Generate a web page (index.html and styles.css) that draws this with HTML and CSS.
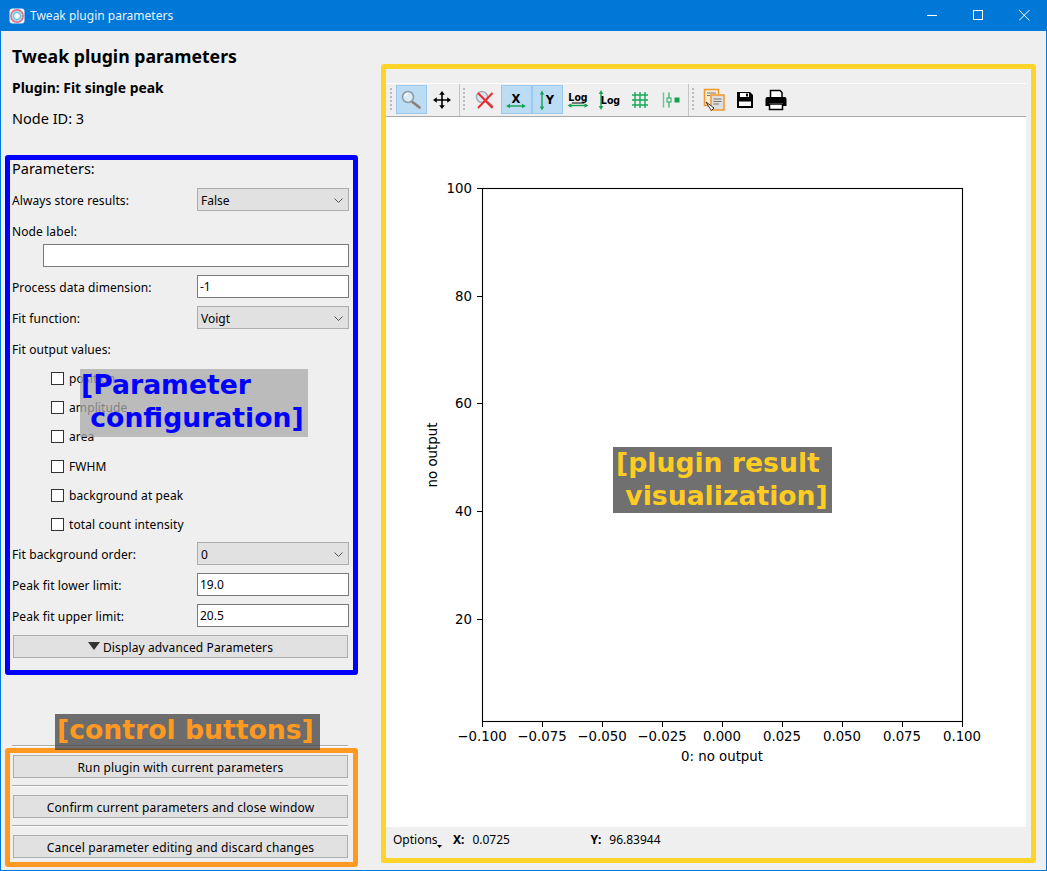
FILE: index.html
```html
<!DOCTYPE html>
<html lang="en">
<head>
<meta charset="utf-8">
<title>Tweak plugin parameters</title>
<link rel="stylesheet" href="styles.css">
</head>
<body>
<div class="window">
  <header class="titlebar">
    <svg class="app-icon" width="16" height="16" viewBox="0 0 16 16"><rect x="0.5" y="0.5" width="15" height="15" rx="3" fill="#f4f4f8"/><circle cx="8" cy="8" r="6.2" fill="#a5dbe3" stroke="#f0608a" stroke-width="1.4"/><circle cx="8" cy="8" r="3.6" fill="#e2f4f7" stroke="#5fbccd" stroke-width="1"/><circle cx="8" cy="8" r="1.4" fill="#fff"/></svg>
    <span class="title-text">Tweak plugin parameters</span>
    <div class="win-controls">
      <span class="win-btn"><svg width="11" height="11" viewBox="0 0 11 11"><path d="M0 5.500H10" stroke="#fff"/></svg></span>
      <span class="win-btn"><svg width="11" height="11" viewBox="0 0 11 11"><rect x="0.500" y="0.500" width="9" height="9" fill="none" stroke="#fff"/></svg></span>
      <span class="win-btn"><svg width="11" height="11" viewBox="0 0 11 11"><path d="M0 0L10.500 10.500M10.500 0L0 10.500" stroke="#fff"/></svg></span>
    </div>
  </header>

  <div class="content">
    <aside class="left">
      <h1 class="heading">Tweak plugin parameters</h1>
      <p class="plugin-name">Plugin: Fit single peak</p>
      <p class="node-id">Node ID: 3</p>

      <section class="params">
        <p class="params-title">Parameters:</p>
        <div class="row"><span class="label">Always store results:</span><div class="combo"><span>False</span><svg width="9" height="5" viewBox="0 0 9 5"><path d="M0.500 0.500L4.500 4.500L8.500 0.500" fill="none" stroke="#555"/></svg></div></div>
        <div class="row"><span class="label">Node label:</span></div>
        <div class="row row-end"><input class="field field-wide" type="text" value=""></div>
        <div class="row"><span class="label">Process data dimension:</span><input class="field" type="text" value="-1"></div>
        <div class="row"><span class="label">Fit function:</span><div class="combo"><span>Voigt</span><svg width="9" height="5" viewBox="0 0 9 5"><path d="M0.500 0.500L4.500 4.500L8.500 0.500" fill="none" stroke="#555"/></svg></div></div>
        <div class="row"><span class="label">Fit output values:</span></div>
        <ul class="checks">
          <li class="check"><span class="box"></span>position</li>
          <li class="check"><span class="box"></span>amplitude</li>
          <li class="check"><span class="box"></span>area</li>
          <li class="check"><span class="box"></span>FWHM</li>
          <li class="check"><span class="box"></span>background at peak</li>
          <li class="check"><span class="box"></span>total count intensity</li>
        </ul>
        <div class="row"><span class="label">Fit background order:</span><div class="combo"><span>0</span><svg width="9" height="5" viewBox="0 0 9 5"><path d="M0.500 0.500L4.500 4.500L8.500 0.500" fill="none" stroke="#555"/></svg></div></div>
        <div class="row"><span class="label">Peak fit lower limit:</span><input class="field" type="text" value="19.0"></div>
        <div class="row"><span class="label">Peak fit upper limit:</span><input class="field" type="text" value="20.5"></div>
        <button class="btn btn-adv" type="button"><svg width="12" height="8" viewBox="0 0 12 8"><path d="M0 0H12L6 8Z" fill="#333"/></svg>Display advanced Parameters</button>
      </section>

      <footer class="controls">
        <hr class="sep">
        <button class="btn" type="button">Run plugin with current parameters</button>
        <hr class="sep">
        <button class="btn" type="button">Confirm current parameters and close window</button>
        <hr class="sep">
        <button class="btn" type="button">Cancel parameter editing and discard changes</button>
      </footer>
    </aside>

    <main class="right">
      <div class="toolbar">
        <div class="tool-group">
          <span class="tool active"><svg width="24" height="24" viewBox="0 0 24 24"><path d="M13.500 14L20.500 19.500" stroke="#8a7f72" stroke-width="2.600" stroke-linecap="round"/><circle cx="9" cy="9" r="5.500" fill="#d8ebf7" stroke="#9398a0" stroke-width="1.500"/><path d="M6 8A3.500 3.500 0 0 1 9 5.500" stroke="#fff" stroke-width="1.300" fill="none"/></svg></span>
          <span class="tool"><svg width="24" height="24" viewBox="0 0 24 24"><path d="M12 5V19M5 12H19" stroke="#000" stroke-width="1.600"/><path d="M12 3L14.800 6.800H9.200ZM12 21L9.200 17.200H14.800ZM3 12L6.800 9.200V14.800ZM21 12L17.200 14.800V9.200Z" fill="#000"/></svg></span>
        </div>
        <div class="tool-group">
          <span class="tool"><svg width="24" height="24" viewBox="0 0 24 24"><path d="M13 13L20 19" stroke="#9a9088" stroke-width="2.500"/><circle cx="9" cy="9" r="5.500" fill="#dbe8f1" stroke="#a7acb2" stroke-width="1.500"/><path d="M5 5L19.500 20M19.500 5L5 20" stroke="#ea2b30" stroke-width="2"/></svg></span>
          <span class="tool active"><svg width="24" height="24" viewBox="0 0 24 24"><text class="axis-letter" x="12" y="15" text-anchor="middle">X</text><path d="M4 18H20" stroke="#12a150" stroke-width="1.400"/><path d="M2 18L6 15.800V20.200ZM22 18L18 15.800V20.200Z" fill="#12a150"/></svg></span>
          <span class="tool active"><svg width="24" height="24" viewBox="0 0 24 24"><path d="M7 5V19" stroke="#12a150" stroke-width="1.400"/><path d="M7 2.500L4.800 6.500H9.200ZM7 22.500L4.800 18.500H9.200Z" fill="#12a150"/><text class="axis-letter" x="15" y="16" text-anchor="middle">Y</text></svg></span>
          <span class="tool"><svg width="24" height="24" viewBox="0 0 24 24"><text class="log-letter" x="12" y="12.500" text-anchor="middle">Log</text><path d="M6 15H18" stroke="#000"/><path d="M4 17.500H20" stroke="#12a150" stroke-width="1.400"/><path d="M1.500 17.500L5.500 15.300V19.700ZM22.500 17.500L18.500 15.300V19.700Z" fill="#12a150"/></svg></span>
          <span class="tool"><svg width="24" height="24" viewBox="0 0 24 24"><path d="M4 5V19" stroke="#12a150" stroke-width="1.400"/><path d="M4 2L1.800 6H6.200ZM4 22L1.800 18H6.200Z" fill="#12a150"/><text class="log-letter" x="13.500" y="15.500" text-anchor="middle">Log</text></svg></span>
          <span class="tool"><svg width="24" height="24" viewBox="0 0 24 24"><path d="M7 4V20M12 4V20M17 4V20M4 7H20M4 12H20M4 17H20" stroke="#18a85a" stroke-width="1.400"/></svg></span>
          <span class="tool"><svg width="24" height="24" viewBox="0 0 24 24"><path d="M4.500 4.500V19.500" stroke="#5cc79a" stroke-width="1.400"/><path d="M10 4.500V10M10 14V19.500" stroke="#18a85a" stroke-width="1.100"/><rect x="8" y="10" width="4" height="4" fill="none" stroke="#18a85a"/><rect x="15.500" y="9.500" width="5" height="5" fill="#12a150"/></svg></span>
        </div>
        <div class="tool-group">
          <span class="tool"><svg width="24" height="24" viewBox="0 0 24 24"><rect x="2.500" y="1.500" width="14" height="16" fill="#f6ebd6" stroke="#f0992c" stroke-width="1.500"/><rect x="9" y="7" width="13" height="15" fill="#dedede" stroke="#f0992c" stroke-width="1.500"/><path d="M5 5H14M5 7.500H8M11.500 11H19.500M11.500 13.500H19.500M11.500 16H17" stroke="#777"/><path d="M4 14L12 20L9.500 22.500L7 19Z" fill="#fff" stroke="#333"/></svg></span>
          <span class="tool"><svg width="24" height="24" viewBox="0 0 24 24"><path d="M4 4H17L20 7V20H4Z" fill="#000"/><rect x="7" y="5" width="9" height="4" fill="#fff"/><rect x="13" y="5.500" width="2" height="3" fill="#000"/><rect x="6" y="13.500" width="12" height="4.500" fill="#fff"/></svg></span>
          <span class="tool"><svg width="24" height="24" viewBox="0 0 24 24"><path d="M6.500 2.500H16L18 4.500V10H6.500Z" fill="#fff" stroke="#000" stroke-width="1.500"/><path d="M3.500 9H20.500Q22.500 9 22.500 11V18H19V15H5V18H1.500V11Q1.500 9 3.500 9Z" fill="#000"/><rect x="5.500" y="16" width="13" height="5.500" fill="#fff" stroke="#000" stroke-width="1.500"/></svg></span>
        </div>
      </div>

      <div class="canvas">
        <svg class="plot" width="640" height="710" viewBox="386 117 640 710">
          <rect x="482.500" y="188.500" width="480" height="533" fill="none" stroke="#000" stroke-width="1.100"/>
          <path d="M482.500 722v5M542.500 722v5M602.500 722v5M662.500 722v5M722.500 722v5M782.500 722v5M842.500 722v5M902.500 722v5M962.500 722v5" stroke="#000" stroke-width="1"/>
          <path d="M477 188.500h5M477 296.500h5M477 403.500h5M477 511.500h5M477 619.500h5" stroke="#000" stroke-width="1"/>
          <g class="tick-x" text-anchor="middle">
            <text x="482" y="741">−0.100</text><text x="542" y="741">−0.075</text><text x="602" y="741">−0.050</text><text x="662" y="741">−0.025</text><text x="722" y="741">0.000</text><text x="782" y="741">0.025</text><text x="842" y="741">0.050</text><text x="902" y="741">0.075</text><text x="962" y="741">0.100</text>
          </g>
          <g class="tick-y" text-anchor="end">
            <text x="472" y="193">100</text><text x="472" y="301">80</text><text x="472" y="408">60</text><text x="472" y="516">40</text><text x="472" y="624">20</text>
          </g>
          <text class="axis-label" x="722" y="761" text-anchor="middle">0: no output</text>
          <text class="axis-label" transform="translate(437 455) rotate(-90)" text-anchor="middle">no output</text>
        </svg>
      </div>

      <div class="status">
        <span class="options">Options<svg class="opt-arrow" width="5" height="3" viewBox="0 0 5 3"><path d="M0 0H5L2.500 3Z" fill="#000"/></svg></span>
        <b class="coord-key">X:</b><span class="coord-val val-x">0.0725</span>
        <b class="coord-key">Y:</b><span class="coord-val">96.83944</span>
      </div>
    </main>
  </div>

  <div class="frame frame-blue"></div>
  <div class="frame frame-orange"></div>
  <div class="frame frame-yellow"></div>
  <div class="note note-param">[Parameter
 configuration]</div>
  <div class="note note-result">[plugin result
 visualization]</div>
  <div class="note note-control">[control buttons]</div>
</div>
</body>
</html>
```

FILE: styles.css
```css
* { box-sizing: border-box; }
html, body { margin: 0; padding: 0; }
body { width: 1047px; height: 871px; overflow: hidden; font-family: "Noto Sans", "Liberation Sans", sans-serif; font-size: 12px; color: #000; background: #efefef; }

.window { position: relative; width: 1047px; height: 871px; display: flex; flex-direction: column; background: #efefef; border: 1px solid #0078d7; border-top: 0; }

.titlebar { height: 31px; flex: none; display: flex; align-items: center; background: #0078d7; color: #fff; margin: 0 -1px; padding-left: 9px; }
.app-icon { flex: none; }
.title-text { margin-left: 5px; font-size: 12px; color: #e6f2fb; }
.win-controls { margin-left: auto; display: flex; }
.win-btn { width: 46px; height: 31px; display: flex; align-items: center; justify-content: center; }

.content { flex: 1; display: flex; min-height: 0; }

.left { width: 385px; flex: none; padding: 13px 0 0 11px; display: flex; flex-direction: column; }
.heading { margin: 0; height: 24px; line-height: 24px; font-size: 17.700px; font-weight: 700; }
.plugin-name { margin: 8px 0 0; height: 24px; line-height: 24px; font-size: 13.900px; font-weight: 700; }
.node-id { margin: 6px 0 0; height: 24px; line-height: 24px; font-size: 14.500px; }

.params { margin: 28px 0 0; width: 337px; display: flex; flex-direction: column; gap: 8px; }
.params-title { margin: 0; height: 22px; line-height: 20px; font-size: 14.500px; }
.row { height: 23px; display: flex; align-items: center; justify-content: space-between; }
.row-end { justify-content: flex-end; margin-top: -6px; }
.label { padding-top: 1px; font-size: 12px; letter-spacing: 0.1px; }
.combo { width: 152px; height: 23px; display: flex; align-items: center; justify-content: space-between; padding: 1px 5px 0 3px; background: #e1e1e1; border: 1px solid #adadad; font-size: 12px; }
.field { width: 152px; height: 23px; padding: 0 2px; background: #fff; border: 1px solid #7a7a7a; border-radius: 0; font: 12px "Noto Sans", sans-serif; color: #000; outline: 0; }
.field-wide { width: 306px; }

.checks { list-style: none; margin: -4px 0 -5px; padding: 0 0 0 39px; }
.check { height: 29.200px; display: flex; align-items: center; font-size: 12px; letter-spacing: 0.1px; }
.box { width: 13px; height: 13px; flex: none; margin-right: 5px; background: #fff; border: 1px solid #333; }

.btn { display: flex; align-items: center; justify-content: center; width: 335px; height: 23px; flex: none; padding: 1px 0 0; margin: 0 0 0 1px; background: #e1e1e1; border: 1px solid #adadad; border-radius: 0; font: 12px "Noto Sans", sans-serif; color: #000; letter-spacing: 0.13px; }
.btn-adv svg { margin: -3px 3px 0 0; }

.controls { margin-top: auto; width: 337px; padding-bottom: 12px; display: flex; flex-direction: column; gap: 7px; }
.sep { width: 336px; height: 3px; flex: none; margin: 0; border: 0; border-top: 1px solid #a9a9a9; box-shadow: inset 0 1px 0 #fff; }

.right { flex: 1; display: flex; flex-direction: column; padding: 52px 20px 12px 0; min-width: 0; }

.toolbar { height: 34px; flex: none; display: flex; background: #efefef; border-top: 1px solid #fff; border-bottom: 1px solid #aaa; padding-left: 1px; }
.tool-group { position: relative; display: flex; padding: 0 1px 0 10px; border-right: 1px solid #c4c4c4; }
.tool-group:first-child { padding-left: 9px; }
.tool-group:last-child { border-right: 0; }
.tool-group::before { content: ""; position: absolute; left: 3px; top: 4px; bottom: 4px; width: 2px; background: repeating-linear-gradient(#bbb 0 2px, transparent 2px 4px); }
.tool { width: 31px; height: 29px; margin-top: 1px; display: flex; align-items: center; justify-content: center; border: 1px solid transparent; }
.tool svg { margin-right: 1px; }
.tool.active { background: #bcdcf4; border-color: #99c9ef; }
.axis-letter { font: 700 11.500px "DejaVu Sans", sans-serif; fill: #000; }
.log-letter { font: 700 10.500px "DejaVu Sans Condensed", "DejaVu Sans", sans-serif; fill: #000; }

.canvas { flex: 1; min-height: 0; background: #fff; }
.plot { display: block; }
.tick-x text, .tick-y text, .axis-label { font: 13.330px "DejaVu Sans", sans-serif; fill: #000; }

.status { height: 31px; flex: none; display: flex; align-items: center; padding: 0 0 6px 7px; font-size: 12px; }
.options { position: relative; width: 60px; font-size: 12px; }
.opt-arrow { position: absolute; left: 44px; top: 14px; }
.coord-key { font-weight: 700; font-size: 12px; }
.coord-val { margin-left: 8px; font-size: 12px; }
.val-x { width: 118px; }

.frame { position: absolute; pointer-events: none; border-style: solid; border-radius: 3px; }
.frame-blue { left: 4px; top: 155px; width: 353px; height: 520px; border-width: 5px; border-color: #0000ff; }
.frame-orange { left: 4px; top: 748px; width: 353px; height: 119px; border-width: 5px; border-color: #ff9922; }
.frame-yellow { left: 380px; top: 64px; width: 655px; height: 799px; border-width: 5px; border-color: #ffd42a; }

.note { position: absolute; white-space: pre; font: 700 26.670px/32.500px "DejaVu Sans", sans-serif; }
.note-param { left: 79px; top: 369px; padding: 0 4px 3px 1px; background: rgba(170, 170, 170, 0.75); color: #0000ff; }
.note-result { left: 612px; top: 447px; padding: 0 4px 1px 3px; background: rgba(64, 64, 64, 0.75); color: #ffcc22; }
.note-control { left: 54px; top: 714px; height: 36px; line-height: 31px; padding: 0 6px 0 2px; background: rgba(64, 64, 64, 0.75); color: #ff9922; }
```
